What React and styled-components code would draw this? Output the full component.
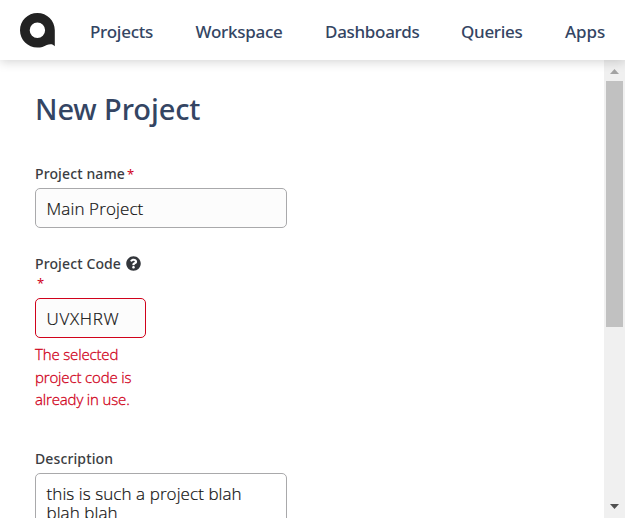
import React from "react";
import styled, { createGlobalStyle } from "styled-components";

const GlobalStyle = createGlobalStyle`
  *, *::before, *::after { box-sizing: border-box; }
  html, body { margin: 0; background: #fff; overflow: hidden; }
  body { font-family: "Noto Sans", "Open Sans", sans-serif; color: #3b3d42; }
`;

const Page = styled.div`
  display: flex;
  flex-direction: column;
  width: 625px;
  height: 518px;
  overflow: hidden;
  background: #fff;
`;

const Header = styled.header`
  position: relative;
  z-index: 1;
  display: flex;
  flex: none;
  height: 60px;
  padding: 12px 0 0 20px;
  background: #fff;
  box-shadow: 0 2px 10px rgba(0, 0, 0, 0.17);
`;

const Logo = styled.svg`
  display: block;
  flex: none;
  width: 36px;
  height: 37px;
  margin-right: 34px;
`;

const Nav = styled.nav`
  display: flex;
  gap: 42px;
`;

const NavLink = styled.a`
  width: ${(p) => p.$width}px;
  font-size: 17px;
  font-weight: 500;
  line-height: 40px;
  letter-spacing: ${(p) => p.$tracking}px;
  white-space: nowrap;
  color: #344563;
`;

const Body = styled.div`
  display: flex;
  flex: 1;
  min-height: 0;
`;

const Content = styled.main`
  flex: 1;
  min-width: 0;
  padding: 29px 35px 0;
  overflow: hidden;
`;

const Title = styled.h1`
  margin: 0 0 34px;
  font-size: 29px;
  font-weight: 500;
  line-height: 40px;
  letter-spacing: -0.1px;
  color: #344563;
`;

const Field = styled.div`
  width: ${(p) => p.$width}px;
  margin-bottom: ${(p) => p.$gap || 0}px;
`;

const Label = styled.label`
  display: block;
  height: ${(p) => p.$height || 25}px;
  padding-top: 1px;
  font-size: 14px;
  font-weight: 500;
  line-height: 20px;
  letter-spacing: 0.12px;
  white-space: nowrap;
  color: #3b3d42;
`;

const Required = styled.span`
  display: ${(p) => (p.$below ? "block" : "inline")};
  margin-left: 2px;
  font-size: 13px;
  font-weight: 400;
  line-height: 18px;
  color: #d0021b;
`;

const HelpIcon = styled.svg`
  width: 15px;
  height: 15px;
  margin-left: 4.5px;
  vertical-align: -2px;
`;

const Input = styled.input`
  display: block;
  width: 100%;
  height: 40px;
  padding: 0 10px 0 10.5px;
  border: 1px solid ${(p) => (p.$invalid ? "#d0021b" : "#a9a9ab")};
  border-radius: 5px;
  outline: none;
  background: #fcfcfc;
  font: 300 17px "Open Sans", "Noto Sans", sans-serif;
  -webkit-text-stroke: 0.2px #111;
  letter-spacing: ${(p) => p.$tracking || 0}px;
  color: #111;
`;

const TextArea = styled.textarea`
  display: block;
  width: 100%;
  height: 100px;
  padding: 10px 10.5px;
  border: 1px solid #a9a9ab;
  border-radius: 5px;
  outline: none;
  resize: none;
  overflow: hidden;
  background: #fff;
  font: 300 17px/19px "Open Sans", "Noto Sans", sans-serif;
  -webkit-text-stroke: 0.2px #111;
  letter-spacing: 0.08px;
  color: #111;
`;

const ErrorText = styled.p`
  margin: 5px 0 0;
  font-family: "Open Sans", "Noto Sans", sans-serif;
  font-size: 15px;
  font-weight: 300;
  -webkit-text-stroke: 0.3px #d0021b;
  line-height: 22.5px;
  letter-spacing: -0.15px;
  color: #d0021b;
`;

const Scrollbar = styled.div`
  display: flex;
  flex-direction: column;
  align-items: center;
  flex: none;
  width: 21px;
  padding-top: 9px;
  background: #f0f0f0;
`;

const Arrow = styled.svg`
  display: block;
  width: 9px;
  height: 5px;
`;

const Thumb = styled.div`
  width: 17px;
  height: 246px;
  margin: 7px 0 177px;
  background: #c1c1c1;
`;

const links = [
  { label: "Projects", width: 63.5, tracking: -0.25 },
  { label: "Workspace", width: 87.5, tracking: -0.25 },
  { label: "Dashboards", width: 94, tracking: -0.3 },
  { label: "Queries", width: 62, tracking: -0.3 },
  { label: "Apps", width: 42, tracking: -0.1 },
];

export default function App() {
  return (
    <>
      <GlobalStyle />
      <Page>
        <Header>
          <Logo viewBox="0 0 36 37" aria-label="Home">
            <path
              fill="#222"
              fillRule="evenodd"
              d="M17.4 1C27 1 34.8 8.6 34.8 18.3V34.3C33 31.8 29.8 31.7 26.8 33C24 34.7 21 35.6 17.4 35.6C7.8 35.6 0 27.9 0 18.3S7.8 1 17.4 1ZM17.4 10.6a7.7 7.7 0 1 0 0 15.4a7.7 7.7 0 1 0 0-15.4Z"
            />
          </Logo>
          <Nav>
            {links.map((l) => (
              <NavLink key={l.label} $width={l.width} $tracking={l.tracking}>
                {l.label}
              </NavLink>
            ))}
          </Nav>
        </Header>
        <Body>
          <Content>
            <Title>New Project</Title>
            <Field $width={252} $gap={25}>
              <Label htmlFor="name">
                Project name<Required>*</Required>
              </Label>
              <Input id="name" defaultValue="Main Project" $tracking={0.12} />
            </Field>
            <Field $width={111} $gap={37.5}>
              <Label htmlFor="code" $height={45}>
                Project Code
                <HelpIcon viewBox="0 0 512 512">
                  <path
                    fill="#33363b"
                    d="M504 256c0 136.997-111.043 248-248 248S8 392.997 8 256C8 119.083 119.043 8 256 8s248 111.083 248 248zM262.655 90c-54.497 0-89.255 22.957-116.549 63.758-3.536 5.286-2.353 12.415 2.715 16.258l34.699 26.31c5.205 3.947 12.621 3.008 16.665-2.122 17.864-22.658 30.113-35.797 57.303-35.797 20.429 0 45.698 13.148 45.698 32.958 0 14.976-12.363 22.667-32.534 33.976C247.128 238.528 216 254.941 216 296v4c0 6.627 5.373 12 12 12h56c6.627 0 12-5.373 12-12v-1.333c0-28.462 83.186-29.647 83.186-106.667 0-58.002-60.165-102-116.531-102zM256 338c-25.365 0-46 20.635-46 46 0 25.364 20.635 46 46 46s46-20.636 46-46c0-25.365-20.635-46-46-46z"
                  />
                </HelpIcon>
                <Required $below>*</Required>
              </Label>
              <Input id="code" defaultValue="UVXHRW" $invalid $tracking={0.7} />
              <ErrorText>
                The selected
                <br />
                project code is
                <br />
                already in use.
              </ErrorText>
            </Field>
            <Field $width={252}>
              <Label htmlFor="description">Description</Label>
              <TextArea id="description" defaultValue="this is such a project blah blah blah" />
            </Field>
          </Content>
          <Scrollbar>
            <Arrow viewBox="0 0 9 5">
              <path fill="#a3a3a3" d="M4.5 0L9 5H0Z" />
            </Arrow>
            <Thumb />
            <Arrow viewBox="0 0 9 5">
              <path fill="#505050" d="M0 0H9L4.5 5Z" />
            </Arrow>
          </Scrollbar>
        </Body>
      </Page>
    </>
  );
}
